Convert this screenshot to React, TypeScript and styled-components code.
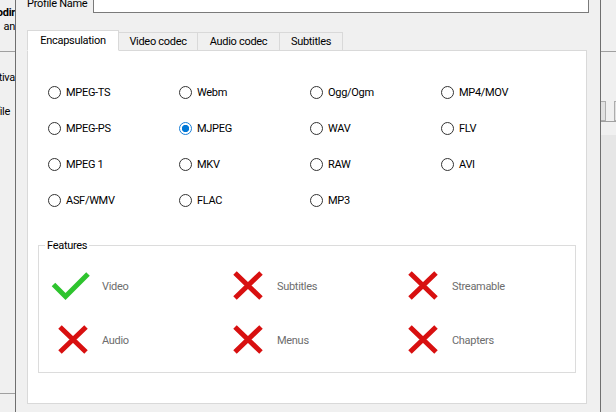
import styled, { createGlobalStyle } from "styled-components";

const GlobalStyle = createGlobalStyle`
  html, body {
    margin: 0;
    padding: 0;
    background: #f0f0f0;
  }
  body {
    font-family: Roboto, "Liberation Sans", sans-serif;
    font-size: 11px;
    letter-spacing: -0.3px;
    color: #000;
  }
`;

const Screen = styled.div`
  display: flex;
  width: 616px;
  height: 412px;
  overflow: hidden;
  background: #f0f0f0;
`;

// the window behind the dialog, only its edges show
const BackStrip = styled.div`
  flex: 0 0 15px;
  display: flex;
  flex-direction: column;
  overflow: hidden;
`;

const BackText = styled.div<{ $bold?: boolean; $inset?: number; $gap?: number }>`
  display: flex;
  justify-content: flex-end;
  white-space: nowrap;
  line-height: 14px;
  margin-top: ${(p) => p.$gap ?? 0}px;
  padding-right: ${(p) => p.$inset ?? 0}px;
  font-weight: ${(p) => (p.$bold ? 700 : 400)};
`;

const BackRule = styled.div<{ $top: string; $bottom?: number }>`
  flex: 0 0 1px;
  background: #a0a0a0;
  margin-top: ${(p) => p.$top};
  margin-bottom: ${(p) => p.$bottom ?? 0}px;
`;

const BackButtons = styled.div`
  display: flex;
  gap: 8px;
  height: 20px;
  margin-top: 49px;
`;

const BackButton = styled.div<{ $width: number }>`
  flex: 0 0 ${(p) => p.$width}px;
  box-sizing: border-box;
  border: 1px solid #adadad;
  border-left-width: ${(p) => (p.$width < 8 ? 0 : 1)}px;
  background: #e1e1e1;
`;

const BackFooter = styled.div`
  flex: 1;
  margin-top: 13px;
  background: #e6e6e6;
`;

const Dialog = styled.div`
  flex: 0 0 586px;
  box-sizing: border-box;
  display: flex;
  flex-direction: column;
  padding: 0 11px;
  border-left: 1px solid #6f6f6f;
  border-right: 1px solid #6f6f6f;
  background: #f0f0f0;
`;

const ProfileRow = styled.div`
  display: flex;
  align-items: center;
  height: 19px;
  margin-top: -6px;
`;

const NameLabel = styled.label`
  flex: 0 0 66px;
  white-space: nowrap;
`;

const NameInput = styled.input`
  flex: 1;
  box-sizing: border-box;
  height: 19px;
  margin: 0;
  border: 1px solid #7a7a7a;
  background: #fff;
  outline: none;
`;

const TabBar = styled.div`
  display: flex;
  align-items: flex-end;
  width: 560px;
  margin-top: 17px;
`;

const Tab = styled.div<{ $active?: boolean; $width: number }>`
  flex: 0 0 ${(p) => p.$width}px;
  box-sizing: border-box;
  height: ${(p) => (p.$active ? 21 : 19)}px;
  display: flex;
  align-items: center;
  justify-content: center;
  border: 1px solid #d9d9d9;
  border-left-width: ${(p) => (p.$active ? 1 : 0)}px;
  border-bottom-color: ${(p) => (p.$active ? "#fff" : "#d9d9d9")};
  background: ${(p) => (p.$active ? "#fff" : "#f0f0f0")};
  white-space: nowrap;
`;

const TabFill = styled.div`
  flex: 1;
  border-bottom: 1px solid #d9d9d9;
`;

const Pane = styled.div`
  box-sizing: border-box;
  width: 560px;
  height: 353px;
  padding-top: 23px;
  border: 1px solid #d9d9d9;
  border-top: none;
  background: #fff;
`;

const RadioGrid = styled.div`
  display: grid;
  grid-template-columns: repeat(4, 131px);
  grid-auto-rows: 36px;
  margin-left: 20px;
`;

const RadioOption = styled.label`
  display: flex;
  align-items: center;
  gap: 5px;
  white-space: nowrap;
`;

const Radio = styled.input.attrs({ type: "radio" })`
  appearance: none;
  flex: 0 0 13px;
  box-sizing: border-box;
  width: 13px;
  height: 13px;
  margin: 0;
  border: 1px solid #333;
  border-radius: 50%;
  background: #fff;

  &:checked {
    border-color: #1a80d8;
    background: radial-gradient(circle, #0078d7 0 3.4px, #fff 3.9px);
  }
`;

const Features = styled.fieldset`
  margin: 21px 10px 0;
  padding: 0;
  min-width: 0;
  border: 1px solid #dcdcdc;
`;

const FeaturesTitle = styled.legend`
  margin-left: 6px;
  padding: 0 2px;
  line-height: 13px;
`;

const FeatureGrid = styled.div`
  display: grid;
  grid-template-columns: repeat(3, 175px);
  grid-auto-rows: 30px;
  row-gap: 24px;
  margin: 19px 0 17px 12px;
`;

const Feature = styled.div`
  display: flex;
  align-items: center;
  gap: 11px;
  color: #6d6d6d;
`;

const Icon = styled.svg`
  flex: 0 0 40px;
  display: block;
`;

const CheckIcon = () => (
  <Icon width="40" height="30" viewBox="0 0 40 30">
    <path
      d="M2.5 13.5 L14.5 25.5 L37 3"
      fill="none"
      stroke="#2ec42e"
      strokeWidth="5"
    />
  </Icon>
);

const CrossIcon = () => (
  <Icon width="40" height="30" viewBox="0 0 40 30">
    <path
      d="M9 2 L35 27 M35 2 L9 27"
      fill="none"
      stroke="#d81010"
      strokeWidth="5"
    />
  </Icon>
);

const formats = [
  "MPEG-TS", "Webm", "Ogg/Ogm", "MP4/MOV",
  "MPEG-PS", "MJPEG", "WAV", "FLV",
  "MPEG 1", "MKV", "RAW", "AVI",
  "ASF/WMV", "FLAC", "MP3",
];

const features = [
  { name: "Video", on: true },
  { name: "Subtitles", on: false },
  { name: "Streamable", on: false },
  { name: "Audio", on: false },
  { name: "Menus", on: false },
  { name: "Chapters", on: false },
];

const tabs = [
  { name: "Encapsulation", width: 92, active: true },
  { name: "Video codec", width: 79 },
  { name: "Audio codec", width: 82 },
  { name: "Subtitles", width: 63 },
];

const App = () => {
  return (
    <Screen>
      <GlobalStyle />
      <BackStrip>
        <BackText $bold $gap={6}>Encodir</BackText>
        <BackText>an</BackText>
        <BackRule $top="17px" />
        <BackText $gap={19}>Activa</BackText>
        <BackText $gap={20} $inset={5}>Profile</BackText>
        <BackRule $top="auto" $bottom={18} />
      </BackStrip>

      <Dialog>
        <ProfileRow>
          <NameLabel htmlFor="profile-name">Profile Name</NameLabel>
          <NameInput id="profile-name" defaultValue="" />
        </ProfileRow>

        <TabBar>
          {tabs.map((t) => (
            <Tab key={t.name} $active={t.active} $width={t.width}>
              {t.name}
            </Tab>
          ))}
          <TabFill />
        </TabBar>

        <Pane>
          <RadioGrid>
            {formats.map((f) => (
              <RadioOption key={f}>
                <Radio name="mux" defaultChecked={f === "MJPEG"} />
                {f}
              </RadioOption>
            ))}
          </RadioGrid>

          <Features>
            <FeaturesTitle>Features</FeaturesTitle>
            <FeatureGrid>
              {features.map((f) => (
                <Feature key={f.name}>
                  {f.on ? <CheckIcon /> : <CrossIcon />}
                  {f.name}
                </Feature>
              ))}
            </FeatureGrid>
          </Features>
        </Pane>
      </Dialog>

      <BackStrip>
        <BackRule $top="51px" />
        <BackButtons>
          <BackButton $width={5} />
          <BackButton $width={20} />
        </BackButtons>
        <BackRule $top="auto" />
        <BackFooter />
      </BackStrip>
    </Screen>
  );
};

export default App;
